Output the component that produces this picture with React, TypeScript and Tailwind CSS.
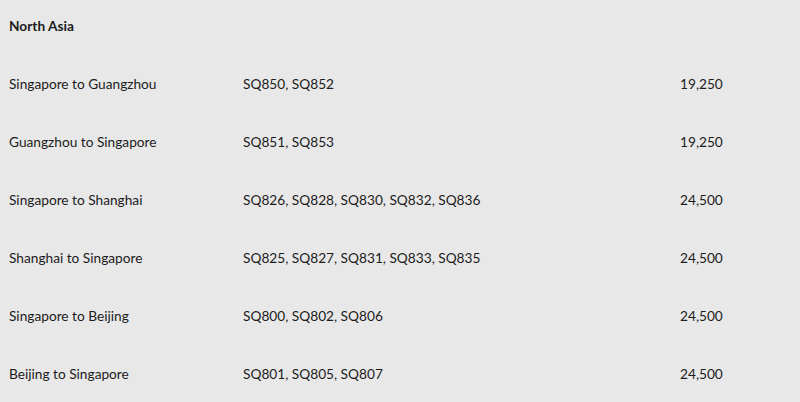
import React from "react";

type Route = { route: string; flights: string; miles: string };

const routes: Route[] = [
  { route: "Singapore to Guangzhou", flights: "SQ850, SQ852", miles: "19,250" },
  { route: "Guangzhou to Singapore", flights: "SQ851, SQ853", miles: "19,250" },
  { route: "Singapore to Shanghai", flights: "SQ826, SQ828, SQ830, SQ832, SQ836", miles: "24,500" },
  { route: "Shanghai to Singapore", flights: "SQ825, SQ827, SQ831, SQ833, SQ835", miles: "24,500" },
  { route: "Singapore to Beijing", flights: "SQ800, SQ802, SQ806", miles: "24,500" },
  { route: "Beijing to Singapore", flights: "SQ801, SQ805, SQ807", miles: "24,500" },
];

export default function App() {
  return (
    <div
      className="w-[800px] h-[402px] overflow-hidden bg-[#e8e8e8] text-[#1c1c1c] text-[13.7px]"
      style={{ fontFamily: "Lato, 'Liberation Sans', sans-serif" }}
    >
      {/* Region heading */}
      <div className="h-[55px] pl-[9px] pt-[18px] leading-4 font-bold">North Asia</div>

      {/* Routes */}
      {routes.map((r) => (
        <div key={r.route} className="h-[58px] flex items-center leading-4">
          <div className="w-[243px] pl-[9px]">{r.route}</div>
          <div className="w-[437px]">{r.flights}</div>
          <div>{r.miles}</div>
        </div>
      ))}
    </div>
  );
}
